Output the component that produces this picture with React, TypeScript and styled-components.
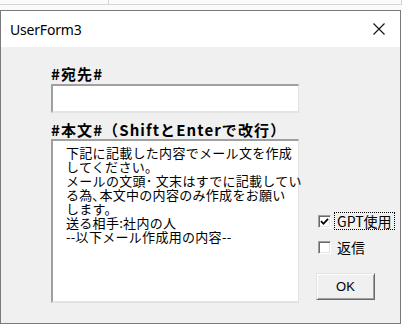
import { createGlobalStyle, styled } from 'styled-components'

const GlobalStyle = createGlobalStyle`
  html, body {
    margin: 0;
    padding: 0;
    background: #ffffff;
  }
  body {
    width: 402px;
    height: 327px;
    overflow: hidden;
    font-family: "Noto Sans CJK JP", "Noto Sans", sans-serif;
  }
`

const messageLines = [
  '下記に記載した内容でメール文を作成',
  'してください。',
  'メールの文頭･ 文末はすでに記載してい',
  'る為､本文中の内容のみ作成をお願い',
  'します。',
  '送る相手:社内の人',
  '--以下メール作成用の内容--',
]

export default function App() {
  return (
    <>
      <GlobalStyle />
      <Page>
        <SheetStrip>
          <SheetCell $width={108} />
          <SheetCell $width={293} />
        </SheetStrip>
        <Window>
          <TitleBar>
            <Title>UserForm3</Title>
            <CloseIcon viewBox="0 0 12 12" aria-label="close">
              <path d="M0.5 0.5 L11.5 11.5 M11.5 0.5 L0.5 11.5" stroke="#111" strokeWidth="1.1" fill="none" />
            </CloseIcon>
          </TitleBar>
          <Body>
            <MainColumn>
              <FieldLabel>#宛先#</FieldLabel>
              <AddressInput />
              <FieldLabel $gap={7}>#本文#（ShiftとEnterで改行）</FieldLabel>
              <MessageBox>{messageLines.join('\n')}</MessageBox>
            </MainColumn>
            <SideColumn>
              <CheckRow>
                <CheckBox>
                  <svg viewBox="0 0 9 9" width="9" height="9">
                    <path d="M1 4.2 L3.5 6.8 L8 1.8" stroke="#000" strokeWidth="1.8" fill="none" />
                  </svg>
                </CheckBox>
                <CheckLabel $focused>GPT使用</CheckLabel>
              </CheckRow>
              <CheckRow>
                <CheckBox />
                <CheckLabel>返信</CheckLabel>
              </CheckRow>
              <OkButton>OK</OkButton>
            </SideColumn>
          </Body>
        </Window>
      </Page>
    </>
  )
}

const Page = styled.div`
  display: flex;
  flex-direction: column;
  width: 402px;
  height: 327px;
  background: #ffffff;
`

const SheetStrip = styled.div`
  display: flex;
  height: 10px;
  background: #fbfbfb;
`

const SheetCell = styled.div<{ $width: number }>`
  width: ${p => p.$width}px;
  height: 4px;
  border-right: 1px solid #d4d4d4;
  border-bottom: 1px solid #d4d4d4;
`

const Window = styled.div`
  display: flex;
  flex-direction: column;
  width: 399px;
  border: 1px solid #7a7a7a;
  background: #f0f0f0;
`

const TitleBar = styled.div`
  display: flex;
  align-items: center;
  justify-content: space-between;
  height: 36px;
  padding: 0 15px 0 9px;
  background: #ffffff;
`

const Title = styled.span`
  font-family: "Noto Sans", sans-serif;
  font-size: 14px;
  color: #000;
  letter-spacing: -0.2px;
`

const CloseIcon = styled.svg`
  width: 12px;
  height: 12px;
`

const Body = styled.div`
  display: flex;
  padding: 17px 0 20px 50px;
`

const MainColumn = styled.div`
  display: flex;
  flex-direction: column;
  width: 248px;
`

const FieldLabel = styled.div<{ $gap?: number }>`
  margin-top: ${p => p.$gap ?? 0}px;
  font-size: 15px;
  line-height: 19px;
  font-weight: 700;
  color: #000;
  letter-spacing: 1.1px;
`

const AddressInput = styled.div`
  margin-top: 1px;
  height: 25px;
  background: #ffffff;
  border-style: solid;
  border-width: 2px 1px 2px 2px;
  border-color: #a0a0a0 #e3e3e3 #e3e3e3 #a0a0a0;
`

const MessageBox = styled.div`
  height: 155px;
  padding: 5px 4px 0 13px;
  background: #ffffff;
  border-style: solid;
  border-width: 2px 1px 2px 2px;
  border-color: #a0a0a0 #e3e3e3 #e3e3e3 #a0a0a0;
  font-size: 13px;
  line-height: 14px;
  letter-spacing: 0.3px;
  color: #000;
  white-space: pre;
`

const SideColumn = styled.div`
  display: flex;
  flex-direction: column;
  align-items: flex-start;
  padding: 149px 0 0 19px;
`

const CheckRow = styled.div`
  display: flex;
  align-items: center;
  gap: 4px;
  height: 16px;
  margin-bottom: 10px;
`

const CheckBox = styled.div`
  display: flex;
  align-items: center;
  justify-content: center;
  box-sizing: border-box;
  width: 13px;
  height: 13px;
  background: #ffffff;
  border-style: solid;
  border-width: 1px;
  border-color: #a0a0a0 #ffffff #ffffff #a0a0a0;
  box-shadow: inset 1px 1px 0 #696969, inset -1px -1px 0 #e3e3e3;
`

const CheckLabel = styled.span<{ $focused?: boolean }>`
  padding: 0 2px;
  font-size: 14px;
  line-height: 16px;
  color: #000;
  outline: ${p => (p.$focused ? '1px dotted #000' : 'none')};
`

const OkButton = styled.button`
  margin: 8px 0 0 -2px;
  width: 59px;
  height: 27px;
  padding: 0;
  background: #f0f0f0;
  border-style: solid;
  border-width: 1px;
  border-color: #e3e3e3 #696969 #696969 #e3e3e3;
  box-shadow: inset 1px 1px 0 #ffffff, inset -1px -1px 0 #a0a0a0;
  font-family: "Liberation Sans", sans-serif;
  font-size: 13px;
  color: #000;
`
